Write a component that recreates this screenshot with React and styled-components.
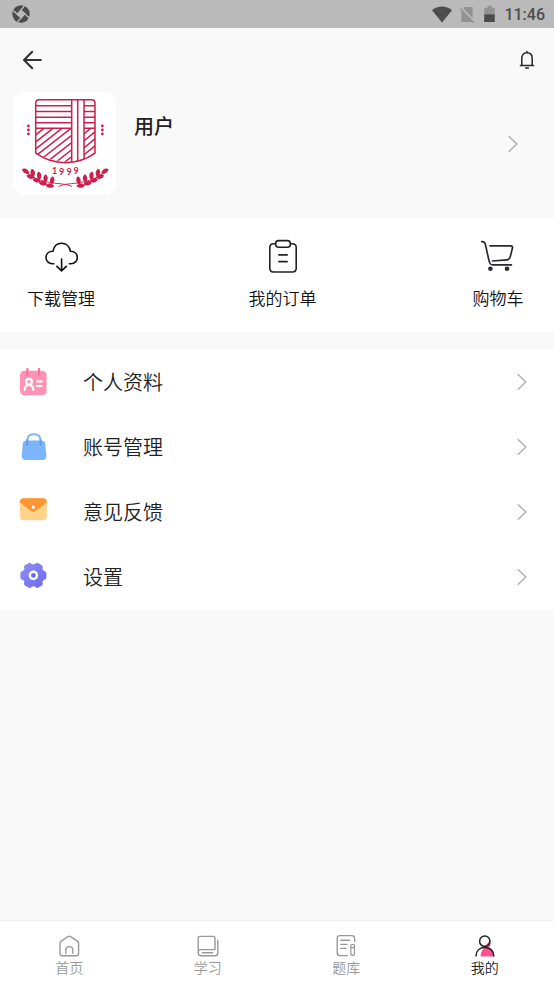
import React from "react";
import styled, { createGlobalStyle } from "styled-components";

const GlobalStyle = createGlobalStyle`
  * {
    box-sizing: border-box;
  }

  body {
    margin: 0;
    background: #f9f9f9;
    color: #222;
    font-family: Roboto, "Noto Sans CJK SC", sans-serif;
    font-weight: 350;
  }

  button {
    padding: 0;
    border: 0;
    background: none;
    color: inherit;
    font: inherit;
    cursor: pointer;
  }

  svg {
    display: block;
    flex-shrink: 0;
  }
`;

/* ---------- status bar icons ---------- */

const AppMark = () => (
  <svg width="18" height="18" viewBox="0 0 18 18">
    <circle cx="9" cy="9" r="8.7" fill="#4b4b4b" />
    <path d="M8.6 4.2 13.8 8.6 9.4 13.8 4.2 9.4Z" fill="#bababa" />
    <g stroke="#bababa" strokeWidth="1.3" fill="none">
      <path d="M5 9.2Q3 6.4 1 6M8.8 5Q11.6 3 12 1M13 8.8Q15 11.6 17 12M9.2 13Q6.4 15 6 17" />
    </g>
  </svg>
);

const WifiIcon = () => (
  <svg width="20" height="17" viewBox="0 0 20 17">
    <path d="M0 4.2C6-.6 14-.6 20 4.2L10 16.6Z" fill="#4d4d4d" />
  </svg>
);

const NoSimIcon = () => (
  <svg width="14" height="17" viewBox="0 0 14 17">
    <path d="M4.6 1H12.6v15H1.4V4.2Z" fill="#929292" />
    <path d="M.6 1 14 15" stroke="#bababa" strokeWidth="2" />
    <path d="M0 2.4 13.6 16.6" stroke="#929292" strokeWidth="1.4" />
  </svg>
);

const BatteryIcon = () => (
  <svg width="14" height="18" viewBox="0 0 14 18">
    <path d="M5.4 .8h4.2v2h3.2V10H2.2V2.8h3.2Z" fill="#929292" />
    <path d="M2.2 9.4h10.6V17H2.2Z" fill="#4b4b4b" />
  </svg>
);

/* ---------- header icons ---------- */

const BackIcon = () => (
  <svg width="20" height="20" viewBox="0 0 20 20" fill="none">
    <path
      d="M18.8 10H2M10.2 1.8 2 10l8.2 8.2"
      stroke="#333"
      strokeWidth="2.1"
      strokeLinecap="round"
      strokeLinejoin="round"
    />
  </svg>
);

const BellIcon = () => (
  <svg width="16" height="20" viewBox="0 0 16 20" fill="none">
    <path
      d="M2.8 15.2V8.4C2.8 5 4.8 2.8 8 2.8s5.2 2.2 5.2 5.6v6.8M1.4 15.4h13.2M8 2.6V1.4M6.6 18h2.8"
      stroke="#26262b"
      strokeWidth="1.5"
      strokeLinecap="round"
    />
  </svg>
);

const Chevron = () => (
  <svg width="10" height="18" viewBox="0 0 10 18" fill="none">
    <path d="m.8 1.2 8 7.8-8 7.8" stroke="#b0b0b0" strokeWidth="1.5" />
  </svg>
);

/* ---------- school crest ---------- */

const leaves = [
  [12.6, 79.2, 32],
  [19.6, 80.8, 80],
  [17.6, 84.8, 14],
  [26, 83.6, 84],
  [23.8, 88.4, 14],
  [32.4, 86.4, 92],
  [30, 91.4, 10],
  [39, 88.4, 100],
  [37, 93.8, 4],
];

const Branch = () => (
  <>
    <path d="M10 78C20 87 34 91 46 91.6Q54 92 59 94.4" strokeWidth=".9" />
    {leaves.map(([x, y, angle]) => (
      <path
        key={`${x}-${y}`}
        d="M-4.2 0C-2.4-3.2 2.2-3 4.2 0 2.2 2.8-2.4 2.6-4.2 0Z"
        transform={`translate(${x} ${y}) rotate(${angle})`}
        fill="#cc1f4d"
        stroke="none"
      />
    ))}
  </>
);

const Crest = () => (
  <svg width="103" height="103" viewBox="0 0 103 103" role="img" aria-label="1999">
    <defs>
      <clipPath id="hatch">
        <path d="M22.7 36.2H58.7V70.2Q40 70 22.7 61.5ZM71 36.2H82V61.5Q77 65 71 67.6Z" />
      </clipPath>
    </defs>
    <g fill="none" stroke="#cc1f4d" strokeWidth="1.5">
      <path d="M26.2 7.8H78.5Q82 7.8 82 11.3V61.2Q69 70.6 52.3 70.8 36 70.6 22.7 61.2V11.3Q22.7 7.8 26.2 7.8Z" />
      <path d="M58.7 7.8V70.3M64.7 7.8V69.6M71 7.8V67.6" />
      <path d="M22.7 13.8H58.7M22.7 19.6H58.7M22.7 25.3H58.7M22.7 30.8H58.7M22.7 36.2H58.7M71 13.8H82M71 19.6H82M71 25.3H82M71 30.8H82M71 36.2H82" />
      <g clipPath="url(#hatch)">
        <path d="M20 45 34 34M20 52 43 34M20 59 52 34M20 66 61 34M27 68 66 37.6M33 70.6 66 44.8M40 72.4 66 52M48 73 66 59M66 46 84 31M66 53 84 38M66 60 84 45M66 67 84 52M66 74 84 59" />
      </g>
      <Branch />
      <g transform="translate(104.6 0) scale(-1 1)">
        <Branch />
      </g>
    </g>
    <g fill="#cc1f4d">
      {[34, 38, 42].map((y) => (
        <React.Fragment key={y}>
          <circle cx="15.4" cy={y} r="1.4" />
          <circle cx="89.3" cy={y} r="1.4" />
        </React.Fragment>
      ))}
      <text
        x="39 46 53.4 60.6"
        y="82 83 83 82"
        fontFamily="Lato, sans-serif"
        fontSize="9"
        fontWeight="700"
      >
        1999
      </text>
    </g>
  </svg>
);

/* ---------- shortcut icons ---------- */

const CloudIcon = () => (
  <svg width="34" height="34" viewBox="0 0 34 34" fill="none">
    <path
      d="M9.8 24.7H8.4c-3.8 0-6.4-2.8-6.4-6.2s2.8-6 6.9-6.2C9.8 7.4 13.2 4.2 17.6 4.2s7.9 3.2 8.8 8.1c4.1.2 6.9 2.8 6.9 6.2s-2.6 6.2-6.4 6.2h-1.6M17.6 20v11.4M12.9 27.4l4.7 4.4 4.7-4.4"
      stroke="#111"
      strokeWidth="1.6"
      strokeLinecap="round"
      strokeLinejoin="round"
    />
  </svg>
);

const OrderIcon = () => (
  <svg width="34" height="34" viewBox="0 0 34 34" fill="none">
    <g stroke="#222" strokeWidth="1.6" strokeLinecap="round">
      <path d="M9.4 4.8H7.6Q3.8 4.8 3.8 8.6V29.2Q3.8 33 7.6 33H26.4Q30.2 33 30.2 29.2V8.6Q30.2 4.8 26.4 4.8H24.6" />
      <rect x="9.6" y="1.6" width="14.8" height="6.6" rx="3" />
      <path d="M13 15.9h8M13 22.6h8" strokeWidth="1.9" />
    </g>
  </svg>
);

const CartIcon = () => (
  <svg width="34" height="34" viewBox="0 0 34 34" fill="none">
    <path
      d="M.8 2.6C2.8 2.4 3.8 3 4.2 4.8L8 21.6C8.8 25 9.4 25.8 11.8 25.8H30.4M9 6.8H29.4Q32 6.8 31.4 9.2L29.2 18Q28.6 20.6 26 20.8L11.4 22"
      stroke="#2b2833"
      strokeWidth="1.7"
      strokeLinecap="round"
      strokeLinejoin="round"
    />
    <circle cx="9.4" cy="29.8" r="2.3" fill="#2b2833" />
    <circle cx="26" cy="29.8" r="2.3" fill="#2b2833" />
  </svg>
);

/* ---------- menu icons ---------- */

const ProfileIcon = () => (
  <svg width="28" height="28" viewBox="0 0 28 28" fill="none">
    <rect x="1" y="2.8" width="26.6" height="24.4" rx="4.4" fill="#ff93b5" />
    <path d="M8.4 1v6M20 1v6" stroke="#ff6f9d" strokeWidth="2.2" strokeLinecap="round" />
    <g stroke="#fff" strokeWidth="2.2" strokeLinecap="round">
      <circle cx="10" cy="13.8" r="2.9" />
      <path d="M5.6 22C5.8 19 7.4 17 10 17s4.2 2 4.4 5M18.2 13.4h4.4M17.6 18h5" />
    </g>
  </svg>
);

const BagIcon = () => (
  <svg width="28" height="28" viewBox="0 0 28 28" fill="none">
    <path
      d="M7.6 7.4H22.4Q25.6 7.4 26.2 10.6L27.4 22Q27.6 27 23.4 27H6.8Q2.4 27 2.8 22L3.8 10.6Q4.4 7.4 7.6 7.4Z"
      fill="#7db5fa"
    />
    <path d="M8.2 7.4C8.4 3.4 11 1.2 14.8 1.2s6.6 2.2 6.8 6.2" stroke="#84b4ec" strokeWidth="2" />
    <path d="M8.2 7.2v4.2M21.6 7.2v4.2" stroke="#5a9cf0" strokeWidth="2" strokeLinecap="round" />
  </svg>
);

const MailIcon = () => (
  <svg width="28" height="28" viewBox="0 0 28 28">
    <rect x="1" y=".2" width="26.8" height="22" rx="4" fill="#ffd28c" />
    <path
      d="M1 4.6V4.2Q1 .2 5 .2H23.8Q27.8 .2 27.8 4.2V4.6L16.8 13Q14.4 14.6 12 13Z"
      fill="#ff9433"
    />
    <circle cx="14.4" cy="9.2" r="1.6" fill="#fff" />
  </svg>
);

const GearIcon = () => (
  <svg width="28" height="28" viewBox="0 0 28 28">
    <defs>
      <linearGradient id="gear" x1="0" y1="0" x2="1" y2="1">
        <stop offset="0" stopColor="#8f90f7" />
        <stop offset="1" stopColor="#6a68ea" />
      </linearGradient>
      <clipPath id="gearShape">
        <circle cx="14.4" cy="12.4" r="11.2" />
        <rect x="1.4" y="8" width="26" height="8.8" rx="2.6" />
        <rect x="1.4" y="8" width="26" height="8.8" rx="2.6" transform="rotate(60 14.4 12.4)" />
        <rect x="1.4" y="8" width="26" height="8.8" rx="2.6" transform="rotate(120 14.4 12.4)" />
      </clipPath>
    </defs>
    <rect width="28" height="28" fill="url(#gear)" clipPath="url(#gearShape)" />
    <circle cx="14.4" cy="12.4" r="3.6" fill="#6b6be8" stroke="#fff" strokeWidth="2.4" />
  </svg>
);

/* ---------- tab icons ---------- */

const HomeIcon = () => (
  <svg width="24" height="24" viewBox="0 0 24 24" fill="none" stroke="currentColor" strokeWidth="1.4">
    <path d="M3 9.4Q3 8 4.2 7.2L11 2.6Q12.3 1.8 13.6 2.6L20.4 7.2Q21.6 8 21.6 9.4V19.4Q21.6 21.8 19.2 21.8H5.4Q3 21.8 3 19.4Z" />
    <path d="M8.8 19.2V16Q8.8 12.6 12.3 12.6T15.8 16V19.2" strokeLinecap="round" />
  </svg>
);

const StudyIcon = () => (
  <svg width="24" height="24" viewBox="0 0 24 24" fill="none" stroke="currentColor" strokeWidth="1.4">
    <path
      d="M2.2 19V4Q2.2 2.4 3.8 2.4H17.4Q19 2.4 19 4V15.6H4.6Q2.2 15.6 2.2 18.6 2.2 21.8 5 21.8H19Q21.8 21.8 21.8 19V6.2"
      strokeLinecap="round"
    />
    <path d="M6.4 18.7H16.6" strokeLinecap="round" />
  </svg>
);

const QuizIcon = () => (
  <svg width="24" height="24" viewBox="0 0 24 24" fill="none" stroke="currentColor" strokeWidth="1.4" strokeLinecap="round">
    <path d="M20.6 7.4V4.4Q20.6 1.6 17.8 1.6H6Q3.2 1.6 3.2 4.4V18.8Q3.2 21.6 6 21.6H13.4M6.8 6.2H15.4M6.8 10.4H13M6.8 14.4H12" />
    <path
      d="M16.8 12Q16.8 10.4 18.6 10.4T20.4 12V19.4Q20.4 21.4 18.6 21.4T16.8 19.4ZM16.8 13.6H20.4"
      strokeWidth="1.2"
    />
  </svg>
);

const MineIcon = () => (
  <svg width="24" height="24" viewBox="0 0 24 24" fill="none">
    <path
      d="M16 7C18.4 9.2 17.4 12 15.8 13.6 19 15.4 20.8 18.4 21.2 22.6H7.6C7.6 18.4 9.4 15.4 12.6 13.6L9.6 12.2Q14.4 11.4 16 7Z"
      fill="#ff4f8e"
    />
    <g stroke="#222" strokeWidth="1.5" strokeLinecap="round">
      <circle cx="11.8" cy="7.2" r="5.2" />
      <path d="M3 22C3.2 16.6 6.8 13.4 11.8 13.4S20.6 16.6 20.8 22" />
    </g>
  </svg>
);

const shortcuts = [
  { label: "下载管理", Icon: CloudIcon },
  { label: "我的订单", Icon: OrderIcon },
  { label: "购物车", Icon: CartIcon },
];

const menu = [
  { label: "个人资料", Icon: ProfileIcon },
  { label: "账号管理", Icon: BagIcon },
  { label: "意见反馈", Icon: MailIcon },
  { label: "设置", Icon: GearIcon },
];

const tabs = [
  { label: "首页", Icon: HomeIcon },
  { label: "学习", Icon: StudyIcon },
  { label: "题库", Icon: QuizIcon },
  { label: "我的", Icon: MineIcon, active: true },
];

const App = () => {
  return (
    <Page>
      <GlobalStyle />
      <StatusBar>
        <AppMark />
        <StatusIcons>
          <WifiIcon />
          <NoSimIcon />
          <BatteryIcon />
          <Clock>11:46</Clock>
        </StatusIcons>
      </StatusBar>
      <Header>
        <button aria-label="返回">
          <BackIcon />
        </button>
        <button aria-label="通知">
          <BellIcon />
        </button>
      </Header>
      <Profile>
        <Avatar>
          <Crest />
        </Avatar>
        <UserName>用户</UserName>
        <Chevron />
      </Profile>
      <Shortcuts>
        {shortcuts.map(({ label, Icon }) => (
          <Shortcut key={label}>
            <Icon />
            {label}
          </Shortcut>
        ))}
      </Shortcuts>
      <Menu>
        {menu.map(({ label, Icon }) => (
          <MenuItem key={label}>
            <Icon />
            <MenuLabel>{label}</MenuLabel>
            <Chevron />
          </MenuItem>
        ))}
      </Menu>
      <TabBar>
        {tabs.map(({ label, Icon, active }) => (
          <Tab key={label} $active={active}>
            <Icon />
            {label}
          </Tab>
        ))}
      </TabBar>
    </Page>
  );
};

const Page = styled.div`
  min-height: 100vh;
  display: flex;
  flex-direction: column;
`;

const StatusBar = styled.div`
  height: 28px;
  display: flex;
  align-items: center;
  justify-content: space-between;
  padding: 0 9px 0 12px;
  background: #bababa;
`;

const StatusIcons = styled.div`
  display: flex;
  align-items: center;
  gap: 8px;
`;

const Clock = styled.span`
  padding-top: 2px;
  color: #4d4d4d;
  font-size: 16px;
  font-weight: 500;
  line-height: 20px;
`;

const Header = styled.header`
  height: 64px;
  display: flex;
  align-items: center;
  justify-content: space-between;
  padding: 0 19px 0 22px;
`;

const Profile = styled.button`
  display: flex;
  align-items: center;
  padding: 0 36px 23px 13px;
  text-align: left;
`;

const Avatar = styled.div`
  border-radius: 12px;
  background: #fff;
`;

const UserName = styled.span`
  flex: 1;
  align-self: flex-start;
  padding: 21px 18px;
  font-size: 20px;
  font-weight: 500;
  line-height: 28px;
`;

const Shortcuts = styled.section`
  display: flex;
  justify-content: space-between;
  padding: 21px 28px 21px 27px;
  background: #fff;
`;

const Shortcut = styled.button`
  min-width: 56px;
  display: flex;
  flex-direction: column;
  align-items: center;
  gap: 14px;
  color: #111;
  font-size: 17px;
  line-height: 24px;
`;

const Menu = styled.section`
  display: flex;
  flex-direction: column;
  margin-top: 17px;
  background: #fff;
`;

const MenuItem = styled.button`
  height: 65px;
  display: flex;
  align-items: center;
  gap: 36px;
  padding: 0 27px 0 19px;
  text-align: left;
`;

const MenuLabel = styled.span`
  flex: 1;
  padding-top: 2px;
  font-size: 20px;
  line-height: 28px;
`;

const TabBar = styled.nav`
  display: grid;
  grid-template-columns: repeat(4, 1fr);
  margin-top: auto;
  background: #fff;
  box-shadow: 0 -1px 2px rgba(0, 0, 0, 0.05);
`;

const Tab = styled.button`
  display: flex;
  flex-direction: column;
  align-items: center;
  gap: 1px;
  padding: 13px 0 9px;
  color: ${({ $active }) => ($active ? "#222" : "#999")};
  font-size: 14px;
  line-height: 18px;
`;

export default App;
